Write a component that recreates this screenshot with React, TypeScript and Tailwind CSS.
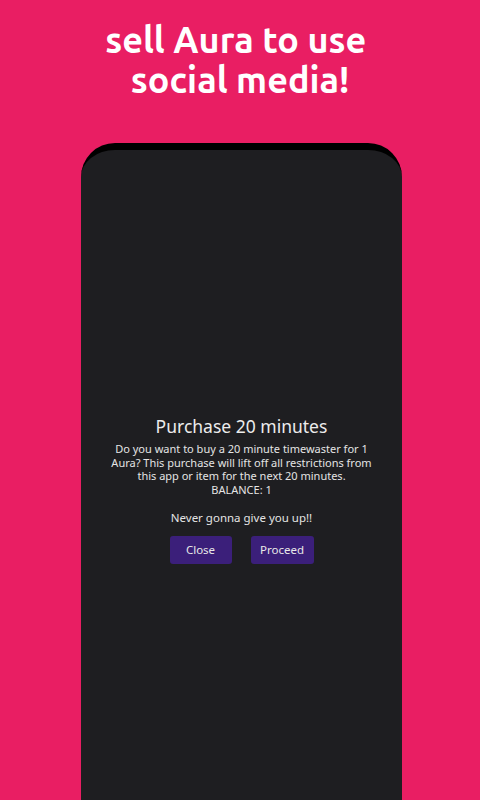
export default function App() {
  return (
    <div className="flex h-[800px] w-[480px] flex-col items-center overflow-hidden bg-[#e91e63]">
      <h1 className="mt-[20px] text-center font-['Ubuntu','Open_Sans',sans-serif] text-[36px] font-bold leading-[40px] text-white">
        sell Aura to use&nbsp;
        <br />
        social media!
      </h1>

      <div className="ml-[3px] mt-[43px] flex w-[321px] flex-1 flex-col items-center rounded-t-[34px] border-t-[7px] border-black bg-[#1e1e21] pt-[265px] font-['Noto_Sans',sans-serif]">
        <h2 className="text-[17.5px] leading-[22px] text-[#ececec]">Purchase 20 minutes</h2>
        <p className="mt-[5px] whitespace-nowrap text-center text-[11px] leading-[13.5px] text-[#e4e4e4]">
          Do you want to buy a 20 minute timewaster for 1
          <br />
          Aura? This purchase will lift off all restrictions from
          <br />
          this app or item for the next 20 minutes.
          <br />
          BALANCE: 1
        </p>
        <p className="mt-[14px] text-[11.5px] leading-[16px] text-[#e4e4e4]">Never gonna give you up!!</p>
        <div className="mt-[10px] flex gap-[19px]">
          <button className="h-[28px] w-[62px] rounded-[3px] bg-[#3b1f7a] text-[11.5px] text-[#e8e8e8]">Close</button>
          <button className="h-[28px] w-[63px] rounded-[3px] bg-[#3b1f7a] text-[11.5px] text-[#e8e8e8]">Proceed</button>
        </div>
      </div>
    </div>
  );
}
